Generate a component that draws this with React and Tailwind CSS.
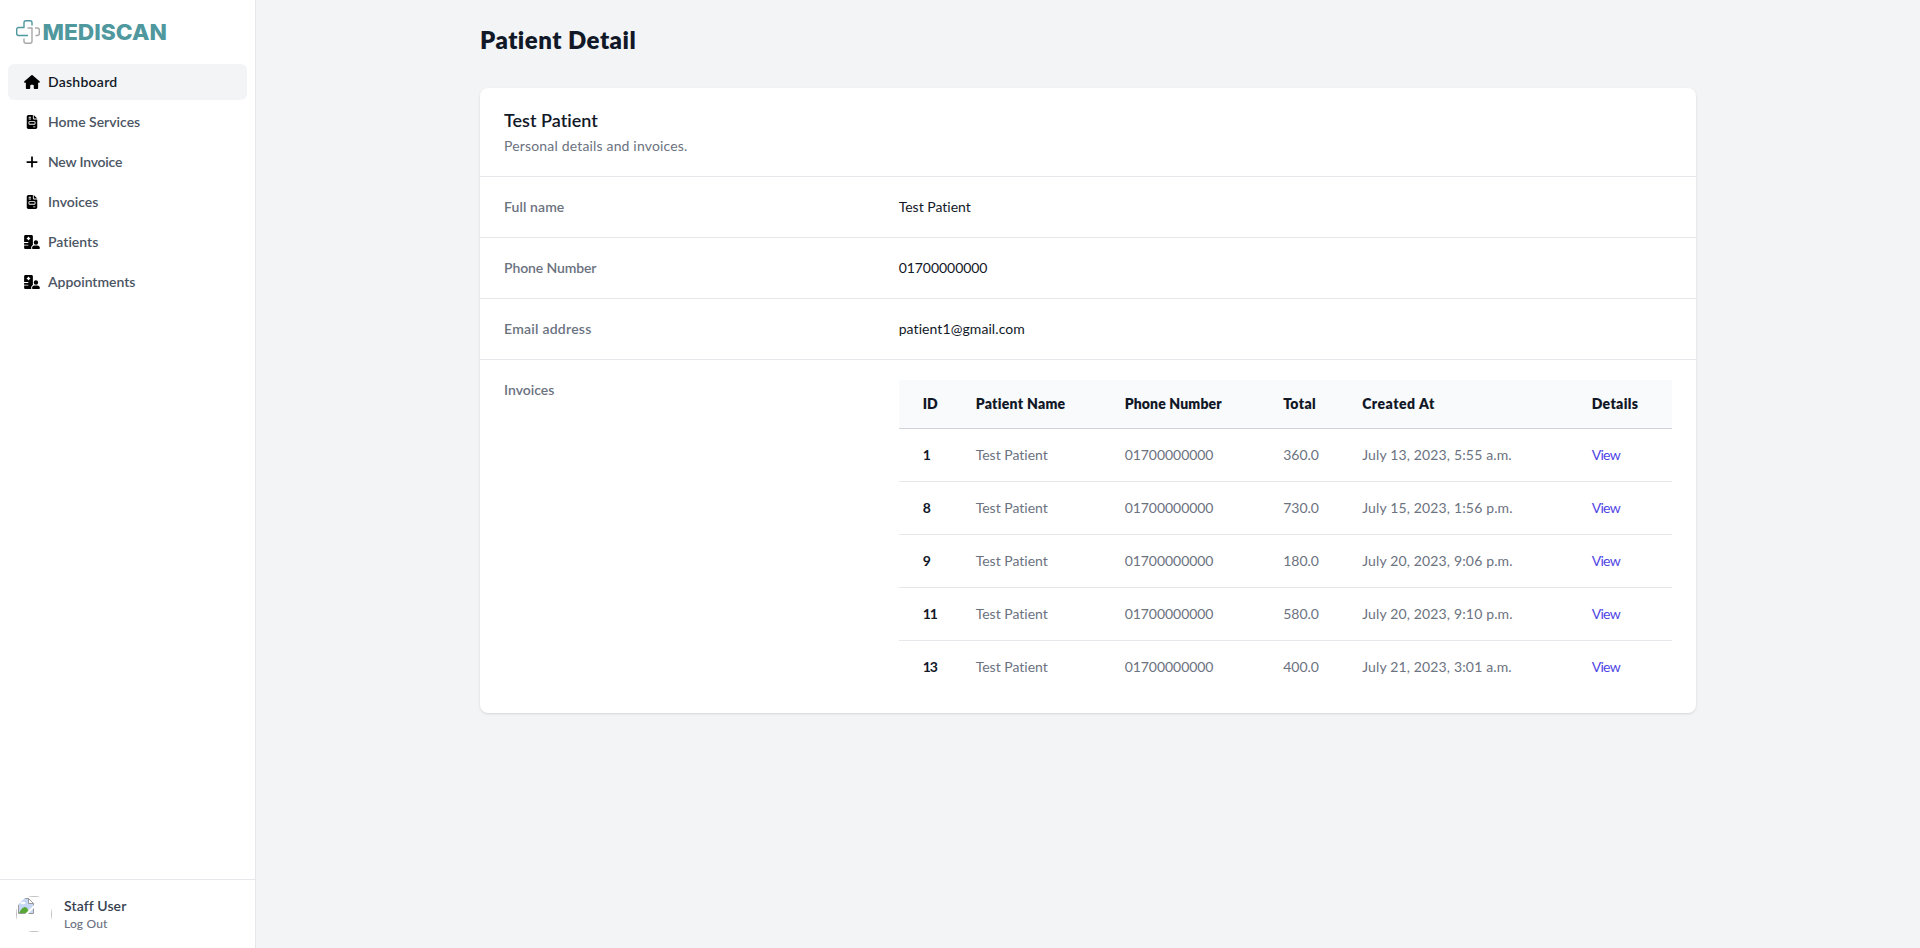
import React from "react";
import { FaHouse, FaFileInvoice, FaPlus, FaHospitalUser } from "react-icons/fa6";

const nav = [
  { label: "Dashboard", Icon: FaHouse, active: true, tracking: "tracking-[0.25px]" },
  { label: "Home Services", Icon: FaFileInvoice, tracking: "tracking-normal" },
  { label: "New Invoice", Icon: FaPlus, tracking: "tracking-[-0.2px]" },
  { label: "Invoices", Icon: FaFileInvoice, tracking: "tracking-normal" },
  { label: "Patients", Icon: FaHospitalUser, tracking: "tracking-normal" },
  { label: "Appointments", Icon: FaHospitalUser, tracking: "tracking-[-0.04px]" },
];

const details = [
  { label: "Full name", value: "Test Patient", labelTracking: "tracking-[0.1px]", tracking: "tracking-normal" },
  { label: "Phone Number", value: "01700000000", labelTracking: "tracking-[-0.12px]", tracking: "tracking-[-0.05px]" },
  { label: "Email address", value: "patient1@gmail.com", labelTracking: "tracking-[0.25px]", tracking: "tracking-[0.08px]" },
];

const columns = [
  { label: "Patient Name", tracking: "tracking-[0.28px]" },
  { label: "Phone Number", tracking: "tracking-[0.15px]" },
  { label: "Total", tracking: "tracking-[0.35px]" },
  { label: "Created At", tracking: "tracking-[0.5px]" },
  { label: "Details", tracking: "tracking-[0.35px]" },
];

const invoices = [
  { id: 1, total: "360.0", created: "July 13, 2023, 5:55 a.m." },
  { id: 8, total: "730.0", created: "July 15, 2023, 1:56 p.m." },
  { id: 9, total: "180.0", created: "July 20, 2023, 9:06 p.m." },
  { id: 11, total: "580.0", created: "July 20, 2023, 9:10 p.m." },
  { id: 13, total: "400.0", created: "July 21, 2023, 3:01 a.m." },
];

function Logo() {
  return (
    <svg width="152" height="32" viewBox="0 0 152 32" fill="none">
      <g strokeWidth="1.4" strokeLinejoin="round">
        <path stroke="#4f989e" d="M16 9.5V6.7a2 2 0 0 0-2-2H10a2 2 0 0 0-2 2V11.5H2.7a2 2 0 0 0-2 2V17.5a2 2 0 0 0 2 2H12" />
        <path stroke="#a9a9a9" d="M11.5 12h4.5V25.3a2 2 0 0 1-2 2H10a2 2 0 0 1-2-2V22.5M19 12h2.3a2 2 0 0 1 2 2V17.5a2 2 0 0 1-2 2H19.5" />
      </g>
      <text x="26.5" y="24" fill="#4f989e" fontFamily="Inter, sans-serif" fontWeight="800" fontSize="22" textLength="124.5" lengthAdjust="spacingAndGlyphs">
        MEDISCAN
      </text>
    </svg>
  );
}

function BrokenImage() {
  return (
    <svg width="16" height="16" viewBox="0 0 16 16">
      <path d="M.5.5h10l5 5v10H.5z" fill="#c6d7f5" stroke="#9a9a9a" />
      <path d="M1 15c2-4 4-6 6-6s3 2 4 6z" fill="#56a733" />
      <ellipse cx="5" cy="5" rx="2.5" ry="1.3" fill="#fff" />
      <path d="M10.5.5v5h5z" fill="#fff" stroke="#9a9a9a" />
      <path d="M7 16l9-9v3l-6 6z" fill="#fff" />
    </svg>
  );
}

function Sidebar() {
  return (
    <aside className="flex w-64 shrink-0 flex-col border-r border-[#e5e7eb] bg-white">
      <div className="flex h-16 items-center px-4">
        <Logo />
      </div>
      <nav className="flex flex-1 flex-col gap-1 px-2">
        {nav.map(({ label, Icon, active, tracking }) => (
          <a
            key={label}
            className={
              active
                ? "flex h-9 items-center rounded-md bg-[#f3f4f6] px-4 text-sm font-semibold text-[#111827]"
                : "flex h-9 items-center rounded-md px-4 text-sm font-semibold text-[#4b5563]"
            }
          >
            <Icon className="mr-2 h-3.5 w-4 text-black" />
            <span className={tracking}>{label}</span>
          </a>
        ))}
      </nav>
      <div className="flex items-center border-t border-[#e5e7eb] p-4">
        <div className="size-9 overflow-hidden rounded-full">
          <div className="size-9 border border-[#c0c0c0] p-px">
            <BrokenImage />
          </div>
        </div>
        <div className="ml-3">
          <p className="text-sm font-semibold tracking-[0.12px] text-[#374151]">Staff User</p>
          <p className="text-xs font-medium tracking-[0.15px] text-[#6b7280]">Log Out</p>
        </div>
      </div>
    </aside>
  );
}

function InvoiceTable() {
  return (
    <table className="w-full table-fixed border-separate border-spacing-0 text-left text-sm whitespace-nowrap">
      <colgroup>
        <col className="w-[65px]" />
        <col className="w-[149px]" />
        <col className="w-[158.5px]" />
        <col className="w-[79px]" />
        <col className="w-[229.5px]" />
        <col />
      </colgroup>
      <thead className="bg-[#f9fafb] text-[#111827]">
        <tr>
          <th className="border-b border-[#d1d5db] py-3.5 pr-3 pl-6 font-extrabold">ID</th>
          {columns.map((c) => (
            <th key={c.label} className="border-b border-[#d1d5db] px-3 py-3.5 font-extrabold">
              <span className={c.tracking}>{c.label}</span>
            </th>
          ))}
        </tr>
      </thead>
      <tbody className="text-[#6b7280] [&>tr:last-child>td]:border-b-0 [&>tr>td]:border-b [&>tr>td]:border-[#e5e7eb]">
        {invoices.map((inv) => (
          <tr key={inv.id}>
            <td className="py-4 pr-3 pl-6 font-bold tracking-[-1px] text-[#111827]">{inv.id}</td>
            <td className="px-3 py-4">Test Patient</td>
            <td className="px-3 py-4 tracking-[-0.05px]">01700000000</td>
            <td className="px-3 py-4">{inv.total}</td>
            <td className="px-3 py-4 tracking-[0.15px]">{inv.created}</td>
            <td className="px-3 py-4 tracking-[-0.7px] text-[#4f46e5]">View</td>
          </tr>
        ))}
      </tbody>
    </table>
  );
}

export default function App() {
  return (
    <div className="flex h-screen bg-[#f3f4f6] font-['Lato',sans-serif] antialiased [font-variant-ligatures:none]">
      <Sidebar />
      <main className="flex-1">
        <div className="mx-auto max-w-7xl px-8 pt-6">
          <h1 className="text-2xl font-extrabold tracking-[0.5px] text-[#111827]">Patient Detail</h1>
          <section className="mt-8 rounded-lg bg-white shadow-sm">
            <header className="px-6 py-5">
              <h2 className="text-lg leading-6 font-semibold text-[#111827]">Test Patient</h2>
              <p className="mt-1 text-sm tracking-[0.17px] text-[#6b7280]">Personal details and invoices.</p>
            </header>
            <dl className="divide-y divide-[#e5e7eb] border-t border-[#e5e7eb] text-sm">
              {details.map((d) => (
                <div key={d.label} className="grid grid-cols-3 gap-4 px-6 py-5">
                  <dt className="font-semibold text-[#6b7280]">
                    <span className={d.labelTracking}>{d.label}</span>
                  </dt>
                  <dd className="col-span-2 text-[#111827]">
                    <span className={d.tracking}>{d.value}</span>
                  </dd>
                </div>
              ))}
              <div className="grid grid-cols-3 gap-4 px-6 py-5">
                <dt className="font-semibold text-[#6b7280]">Invoices</dt>
                <dd className="col-span-2">
                  <InvoiceTable />
                </dd>
              </div>
            </dl>
          </section>
        </div>
      </main>
    </div>
  );
}
